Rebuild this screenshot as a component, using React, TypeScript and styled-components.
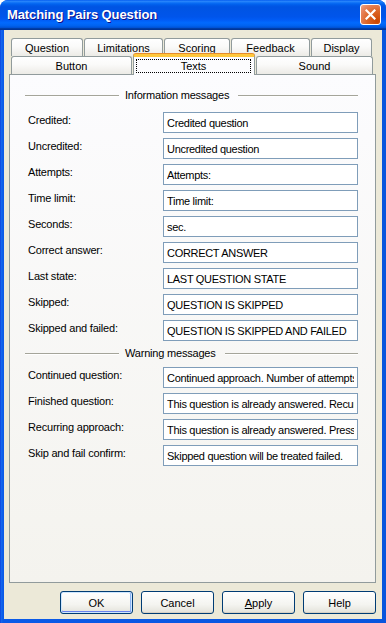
import React from 'react';
import styled, { createGlobalStyle } from 'styled-components';

const GlobalStyle = createGlobalStyle`
  html, body {
    margin: 0;
    padding: 0;
    background: #ffffff;
  }

  body {
    font-family: 'Liberation Sans', Arial, sans-serif;
    font-size: 11px;
    color: #000000;
  }
`;

const Window = styled.div`
  width: 386px;
  height: 623px;
  box-sizing: border-box;
  display: flex;
  flex-direction: column;
  background: linear-gradient(to right, #0831d9 0, #166aee 1px, #0a5ae8 3px, #0855dd 100%);
  border-radius: 8px 8px 0 0;
  overflow: hidden;
`;

const TitleBar = styled.div`
  height: 30px;
  flex: none;
  display: flex;
  align-items: center;
  justify-content: space-between;
  padding: 0 5px 0 7px;
  background: linear-gradient(
    to bottom,
    #0058ee 0%,
    #2a86fb 4%,
    #1c7cf8 7%,
    #0a6ef5 10%,
    #0262ee 14%,
    #0057e5 20%,
    #0054e3 24%,
    #0055eb 56%,
    #005bf5 66%,
    #026afe 76%,
    #0062ef 86%,
    #0052d6 92%,
    #0040ab 94%,
    #003092 100%
  );
`;

const Title = styled.span`
  color: #ffffff;
  font-weight: bold;
  font-size: 13px;
  letter-spacing: -0.1px;
  text-shadow: 1px 1px #0f1089;
  padding-bottom: 1px;
`;

const CloseButton = styled.div`
  width: 21px;
  height: 21px;
  box-sizing: border-box;
  border: 1px solid #ffffff;
  border-radius: 3px;
  background: radial-gradient(circle at 85% 85%, #cc4600 0%, #dc6527 45%, #e88762 80%, #f0a98a 100%);
  display: flex;
  align-items: center;
  justify-content: center;
  margin-bottom: 1px;
`;

const Body = styled.div`
  flex: 1;
  margin: 0 4px 4px 4px;
  background: #ece9d8;
  padding: 8px 6px 0 5px;
  display: flex;
  flex-direction: column;
`;

const TabRow = styled.div`
  display: flex;
  gap: 1px;
  padding-left: 2px;
  height: 18px;
`;

const Tab = styled.div<{ $w: number; $active?: boolean }>`
  width: ${(p) => p.$w}px;
  box-sizing: border-box;
  border: 1px solid #919b9c;
  border-bottom: none;
  border-radius: 3px 3px 0 0;
  background: linear-gradient(to bottom, #ffffff 0%, #fafaf9 45%, #ecebe6 100%);
  display: flex;
  align-items: center;
  justify-content: center;
  height: 18px;
  padding-top: 1px;

  ${(p) =>
    p.$active &&
    `
    position: relative;
    z-index: 2;
    height: 21px;
    margin-top: -2px;
    background: #fcfcfe;
    border-top: 3px solid #ffc83c;
    box-shadow: 0 -1px 0 #e68b2c;
    padding: 1px 3px 2px 2px;
  `}
`;

const FocusLabel = styled.span`
  flex: 1;
  align-self: stretch;
  display: flex;
  align-items: center;
  justify-content: center;
  border: 1px dotted #000000;
  margin-top: 1px;
`;

const Pane = styled.div`
  height: 509px;
  box-sizing: border-box;
  border: 1px solid #919b9c;
  background: linear-gradient(to bottom, #fcfcfe 0%, #f4f3ee 100%);
  padding: 13px 17px 0 15px;
  display: flex;
  flex-direction: column;
`;

const GroupHeader = styled.div<{ $gapTop: number; $gapBottom: number }>`
  display: flex;
  align-items: center;
  height: 14px;
  margin-top: ${(p) => p.$gapTop}px;
  margin-bottom: ${(p) => p.$gapBottom}px;
  letter-spacing: -0.2px;
`;

const Rule = styled.div<{ $w?: number }>`
  height: 1px;
  background: #a5a59a;
  box-shadow: 0 1px #ffffff;
  ${(p) => (p.$w ? `width: ${p.$w}px; flex: none;` : 'flex: 1;')}
`;

const HeaderText = styled.span`
  padding: 0 9px 0 6px;
`;

const Rows = styled.div`
  display: flex;
  flex-direction: column;
  gap: 5px;
`;

const Row = styled.div`
  display: flex;
  align-items: flex-start;
  padding-left: 3px;
`;

const Label = styled.span`
  width: 135px;
  padding-top: 2px;
  letter-spacing: -0.2px;
`;

const TextBox = styled.input`
  width: 195px;
  height: 21px;
  box-sizing: border-box;
  border: 1px solid #7f9db9;
  background: #ffffff;
  padding: 0 3px;
  margin: 0;
  font-family: 'Liberation Sans', Arial, sans-serif;
  font-size: 11px;
  letter-spacing: -0.3px;
  color: #000000;
  outline: none;
`;

const Footer = styled.div`
  display: flex;
  justify-content: flex-end;
  gap: 8px;
  margin-top: 8px;
`;

const Button = styled.button<{ $default?: boolean }>`
  width: 73px;
  height: 23px;
  box-sizing: border-box;
  border: 1px solid #003c74;
  border-radius: 3px;
  background: linear-gradient(to bottom, #ffffff 0%, #f4f4f0 60%, #e3e2da 100%);
  font-family: 'Liberation Sans', Arial, sans-serif;
  font-size: 11px;
  color: #000000;
  padding: 0;
  box-shadow: ${(p) =>
    p.$default
      ? 'inset 0 0 0 1px #cee7ff, inset 0 -1px 0 1px #6982ee, inset -1px 0 0 1px #8cb4f2'
      : 'inset 0 -1px 0 #d6d0c5'};
`;

const infoRows: [string, string][] = [
  ['Credited:', 'Credited question'],
  ['Uncredited:', 'Uncredited question'],
  ['Attempts:', 'Attempts:'],
  ['Time limit:', 'Time limit:'],
  ['Seconds:', 'sec.'],
  ['Correct answer:', 'CORRECT ANSWER'],
  ['Last state:', 'LAST QUESTION STATE'],
  ['Skipped:', 'QUESTION IS SKIPPED'],
  ['Skipped and failed:', 'QUESTION IS SKIPPED AND FAILED'],
];

const warningRows: [string, string][] = [
  ['Continued question:', 'Continued approach. Number of attempts: %d'],
  ['Finished question:', 'This question is already answered. Recurring approach is not allowed.'],
  ['Recurring approach:', 'This question is already answered. Press OK to continue.'],
  ['Skip and fail confirm:', 'Skipped question will be treated failed.'],
];

const topTabs: [string, number][] = [
  ['Question', 72],
  ['Limitations', 79],
  ['Scoring', 66],
  ['Feedback', 79],
  ['Display', 61],
];

const App: React.FC = () => {
  return (
    <>
      <GlobalStyle />
      <Window>
        <TitleBar>
          <Title>Matching Pairs Question</Title>
          <CloseButton>
            <svg width="11" height="11" viewBox="0 0 11 11">
              <path d="M1.5 1.5 L9.5 9.5 M9.5 1.5 L1.5 9.5" stroke="#ffffff" strokeWidth="2.2" strokeLinecap="square" />
            </svg>
          </CloseButton>
        </TitleBar>
        <Body>
          <TabRow>
            {topTabs.map(([name, w]) => (
              <Tab key={name} $w={w}>
                {name}
              </Tab>
            ))}
          </TabRow>
          <TabRow>
            <Tab $w={121}>Button</Tab>
            <Tab $w={122} $active>
              <FocusLabel>Texts</FocusLabel>
            </Tab>
            <Tab $w={117}>Sound</Tab>
          </TabRow>
          <Pane>
            <GroupHeader $gapTop={0} $gapBottom={10}>
              <Rule $w={94} />
              <HeaderText>Information messages</HeaderText>
              <Rule />
            </GroupHeader>
            <Rows>
              {infoRows.map(([label, value]) => (
                <Row key={label}>
                  <Label>{label}</Label>
                  <TextBox readOnly value={value} />
                </Row>
              ))}
            </Rows>
            <GroupHeader $gapTop={5} $gapBottom={7}>
              <Rule $w={94} />
              <HeaderText>Warning messages</HeaderText>
              <Rule />
            </GroupHeader>
            <Rows>
              {warningRows.map(([label, value]) => (
                <Row key={label}>
                  <Label>{label}</Label>
                  <TextBox readOnly value={value} />
                </Row>
              ))}
            </Rows>
          </Pane>
          <Footer>
            <Button $default>OK</Button>
            <Button>Cancel</Button>
            <Button>
              <u>A</u>pply
            </Button>
            <Button>Help</Button>
          </Footer>
        </Body>
      </Window>
    </>
  );
};

export default App;
